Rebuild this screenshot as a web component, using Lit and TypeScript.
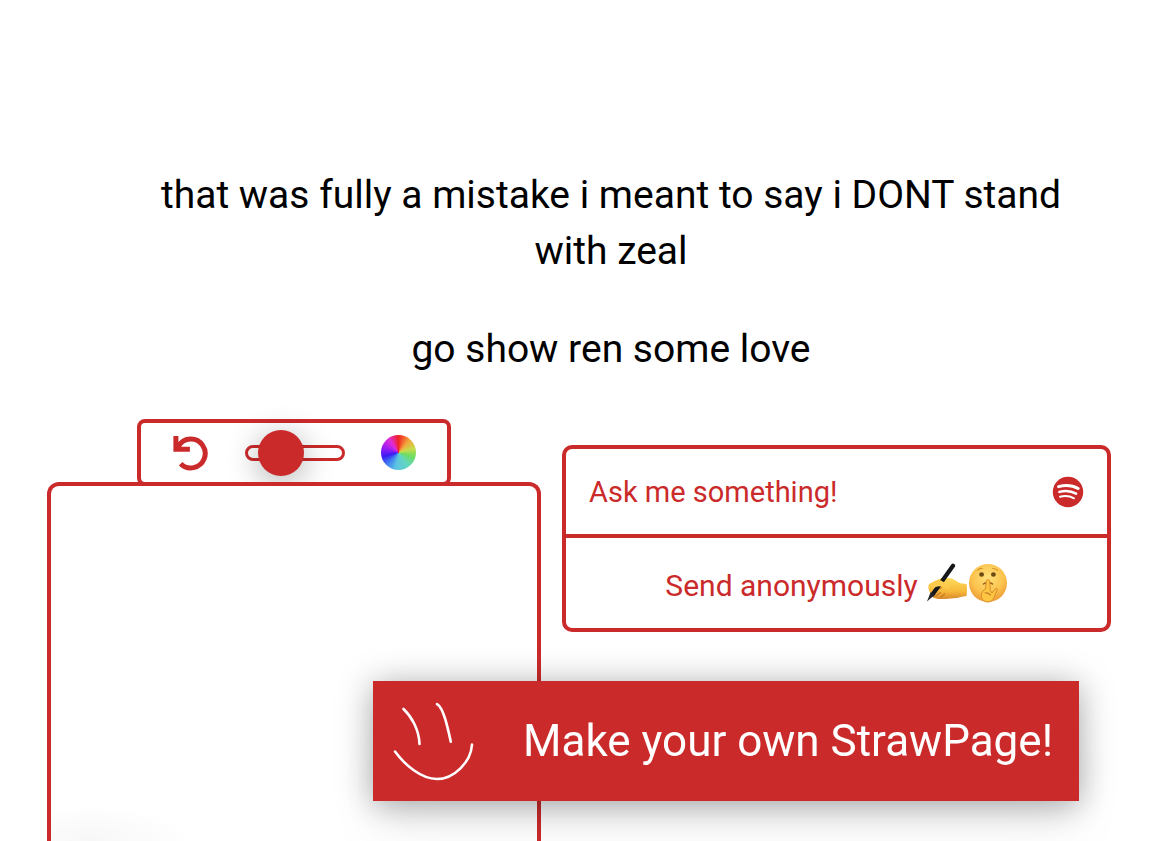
import { LitElement, html, css, svg } from "lit";
import { customElement, state } from "lit/decorators.js";

const undoIcon = svg`
  <svg viewBox="0 0 36 36" width="36" height="36" fill="none" stroke="currentColor" aria-hidden="true">
    <path d="M5.6 12.5C8.6 7 13 4.1 18.6 4.1a14.4 14.4 0 1 1-10 24.6" stroke-width="5" />
    <path d="M3.9 1v13.2h14" stroke-width="5" />
  </svg>`;

const spotifyIcon = svg`
  <svg viewBox="0 0 32 32" width="32" height="32" aria-hidden="true">
    <circle cx="16" cy="16" r="15.2" fill="currentColor" />
    <g fill="none" stroke="#fff" stroke-linecap="round">
      <path d="M6.5 10.6c6.600-1.900 14.200-1.300 19.700 1.900" stroke-width="3" />
      <path d="M7.400 15.900c5.700-1.600 11.900-1 16.700 1.800" stroke-width="2.500" />
      <path d="M8 20.700c4.900-1.300 9.900-.8 14 1.600" stroke-width="2" />
    </g>
  </svg>`;

const writingHand = svg`
  <svg viewBox="0 0 42 40" width="42" height="40" role="img" aria-label="writing hand">
    <defs>
      <linearGradient id="hand" x1="0" y1="0" x2="0" y2="1">
        <stop offset="0" stop-color="#ffdc5c" />
        <stop offset=".65" stop-color="#f6b93a" />
        <stop offset="1" stop-color="#d8882a" />
      </linearGradient>
    </defs>
    <path d="M2.500 22.500c.5-2.500 4-3 7-4.500 3.500-2 6.500-3.600 10-3.200l6.500.8c3 1.200 5.500 3.900 8.500 4.700l6 .6c.8 3.500.6 8.500 0 12-5 .5-8.500 2-13 2.400-5.500.6-14 1.200-17.500.2C5.500 34.500 5 31.500 3.800 29c-1.200-2-1.700-4.300-1.300-6.500z" fill="url(#hand)" />
    <path d="M9 27c2.500-.2 4.500-1 6.500-2.200M10 33l4.500-3.500M14.500 34.500l4-3.500" fill="none" stroke="#c97c28" stroke-width="1.200" stroke-linecap="round" />
    <path d="M27 2.800 6.500 31.500" stroke="#15171a" stroke-width="4.200" stroke-linecap="round" />
    <path d="M4.600 29.200 1 38.600l7.500-6.600z" fill="#23262b" />
    <path d="M5 21c3-3.500 8-5 11-3 3 1.800 4.500 3 6.500 4 2.200 1.600.8 4.200-1.700 3.600-2.800-.8-4.800-2.400-7.300-2.300-3 .2-5.500 1.700-8.500 1.700z" fill="#fcca4c" />
  </svg>`;

const shushingFace = svg`
  <svg viewBox="0 0 40 40" width="40" height="40" role="img" aria-label="shushing face">
    <defs>
      <radialGradient id="face" cx=".5" cy=".35" r=".65">
        <stop offset="0" stop-color="#ffe07a" />
        <stop offset=".65" stop-color="#fbc24d" />
        <stop offset="1" stop-color="#ec9a34" />
      </radialGradient>
    </defs>
    <circle cx="20" cy="20" r="19" fill="url(#face)" />
    <ellipse cx="13.600" cy="11.500" rx="2.400" ry="2.300" fill="#6b4a14" />
    <ellipse cx="25.400" cy="11.500" rx="2.400" ry="2.300" fill="#6b4a14" />
    <path d="M9.500 7.500c1.300-1.800 3.300-2.300 5-2M24.500 5.500c2-.2 3.700.5 5 2" fill="none" stroke="#d9952b" stroke-width="1.100" stroke-linecap="round" />
    <path d="M15.500 21c1-.8 1.800-1 2.600-1M24.500 21c-1-.8-1.800-1-2.600-1" fill="none" stroke="#955d18" stroke-width="1.500" stroke-linecap="round" />
    <path d="M18.200 18.500c0-2.400 3.600-2.400 3.600 0l.5 9 1.700 2.500 3.500-4.300c1.200-.8 2.200 0 1.700 1.300l-3.200 7.500c-1 2.700-3 4.500-6.300 4.500-4.800-.2-6.600-3.500-6.400-7.300.2-2.700 2.200-4.700 4.300-5.700z" fill="#fcc542" stroke="#d9892a" stroke-width="1" />
    <path d="M17 30c2-.3 4 .4 5.500 2" fill="none" stroke="#c87a24" stroke-width="1.100" stroke-linecap="round" />
  </svg>`;

const smile = svg`
  <svg viewBox="0 0 82 80" width="82" height="80" fill="none" stroke="#fff" stroke-width="2.600" stroke-linecap="round" stroke-linejoin="round" aria-hidden="true">
    <path d="M10.500 8C18 15 26 28 26.500 43" />
    <path d="M44 3.200c6.500 3.500 10.500 22.500 13.800 37.500" />
    <path d="M2 50.500C12 64 28 78 44 78c17 0 34-17 35-34.500" />
  </svg>`;

@customElement("drawing-board")
export class DrawingBoard extends LitElement {
  static styles = css`
    :host {
      display: flex;
      flex-direction: column;
      align-items: center;
      color: var(--accent);
    }
    .toolbar {
      box-sizing: border-box;
      display: flex;
      align-items: center;
      justify-content: space-between;
      width: 314px;
      height: 67px;
      margin-bottom: -4px;
      padding: 0 31px;
      border: 4px solid var(--accent);
      border-radius: 8px;
    }
    .tool {
      display: block;
      padding: 0;
      border: 0;
      background: none;
      color: inherit;
      cursor: pointer;
    }
    .tool svg {
      display: block;
    }
    .wheel {
      width: 35px;
      height: 35px;
      border-radius: 50%;
      background: conic-gradient(
        #f02222,
        #f2a43c 40deg,
        #c8dc4c 75deg,
        #6fdc60 105deg,
        #62d6c0 145deg,
        #5cc4e4 190deg,
        #3f7cf0 225deg,
        #3a1cf4 255deg,
        #a01cf0 290deg,
        #e02cd8 325deg,
        #f02222
      );
    }
    .size {
      appearance: none;
      width: 100px;
      height: 46px;
      margin: 0;
      background: none;
      cursor: pointer;
    }
    .size::-webkit-slider-runnable-track {
      box-sizing: border-box;
      height: 16px;
      border: 3px solid var(--accent);
      border-radius: 8px;
    }
    .size::-webkit-slider-thumb {
      appearance: none;
      width: 46px;
      height: 46px;
      margin-top: -18px;
      border-radius: 50%;
      background: var(--accent);
      box-shadow: 0 6px 32px rgba(0, 0, 0, 0.32);
    }
    .canvas {
      box-sizing: border-box;
      flex: 1;
      width: 100%;
      min-height: 240px;
      border: 4px solid var(--accent);
      border-bottom: 0;
      border-radius: 12px 12px 0 0;
      background: radial-gradient(ellipse 100px 36px at 40px 100%, #f7f7f7, #fff);
    }
  `;

  @state() private brush = 22;

  render() {
    return html`
      <div class="toolbar">
        <button class="tool" type="button" aria-label="Undo">${undoIcon}</button>
        <input
          class="size"
          type="range"
          min="0"
          max="100"
          aria-label="Brush size"
          .value=${String(this.brush)}
          @input=${(e: Event) => (this.brush = Number((e.target as HTMLInputElement).value))}
        />
        <button class="tool wheel" type="button" aria-label="Pick a colour"></button>
      </div>
      <div class="canvas"></div>
    `;
  }
}

@customElement("ask-box")
export class AskBox extends LitElement {
  static styles = css`
    :host {
      display: block;
      color: var(--accent);
    }
    .box {
      border: 4px solid var(--accent);
      border-radius: 10px;
    }
    .row {
      display: flex;
      align-items: center;
      height: 85px;
      padding: 0 23px;
      border-bottom: 4px solid var(--accent);
    }
    .question {
      flex: 1;
      min-width: 0;
      padding: 0;
      border: 0;
      outline: 0;
      background: none;
      font: inherit;
      font-size: 29px;
      color: inherit;
    }
    .question::placeholder {
      color: inherit;
      opacity: 1;
    }
    .icon,
    .send {
      border: 0;
      padding: 0;
      background: none;
      color: inherit;
      cursor: pointer;
    }
    .icon svg,
    .send svg {
      display: block;
    }
    .send {
      display: flex;
      align-items: center;
      justify-content: center;
      gap: 8px;
      width: 100%;
      height: 90px;
      padding-top: 4px;
      font: inherit;
      font-size: 30px;
    }
    .emoji {
      display: flex;
      padding-bottom: 4px;
    }
  `;

  render() {
    return html`
      <form class="box" @submit=${(e: Event) => e.preventDefault()}>
        <div class="row">
          <input class="question" type="text" aria-label="Ask me something!" placeholder="Ask me something!" />
          <button class="icon" type="button" aria-label="Attach a song">${spotifyIcon}</button>
        </div>
        <button class="send" type="submit">
          <span>Send anonymously</span>
          <span class="emoji">${writingHand}${shushingFace}</span>
        </button>
      </form>
    `;
  }
}

@customElement("app-root")
export class AppRoot extends LitElement {
  static styles = css`
    :host {
      --accent: #cb2a2b;
      display: flex;
      flex-direction: column;
      box-sizing: border-box;
      min-height: 100vh;
      padding-top: 167px;
      background: #fff;
      font-family: Roboto, sans-serif;
    }
    .message {
      padding: 0 90px 0 142px;
      color: #000;
      font-size: 39px;
      line-height: 56px;
      text-align: center;
    }
    .message p {
      margin: 0 0 42px;
    }
    .widgets {
      flex: 1;
      display: grid;
      grid-template-columns: 9fr 10fr;
      gap: 21px;
      padding: 0 59px 0 47px;
    }
    .ask {
      align-self: start;
      margin-top: 26px;
    }
    .promo {
      position: fixed;
      right: 91px;
      bottom: 40px;
      box-sizing: border-box;
      display: flex;
      align-items: center;
      justify-content: space-between;
      width: 706px;
      max-width: 90%;
      height: 120px;
      padding: 0 26px 0 20px;
      background: var(--accent);
      box-shadow: 0 4px 32px rgba(0, 0, 0, 0.36), 0 40px 60px rgba(0, 0, 0, 0.04);
      color: #fff;
      font-size: 44px;
      text-decoration: none;
    }
  `;

  render() {
    return html`
      <section class="message">
        <p>that was fully a mistake i meant to say i DONT stand with zeal</p>
        <p>go show ren some love</p>
      </section>
      <main class="widgets">
        <drawing-board></drawing-board>
        <ask-box class="ask"></ask-box>
      </main>
      <a class="promo" href="#make">${smile}<span>Make your own StrawPage!</span></a>
    `;
  }
}
